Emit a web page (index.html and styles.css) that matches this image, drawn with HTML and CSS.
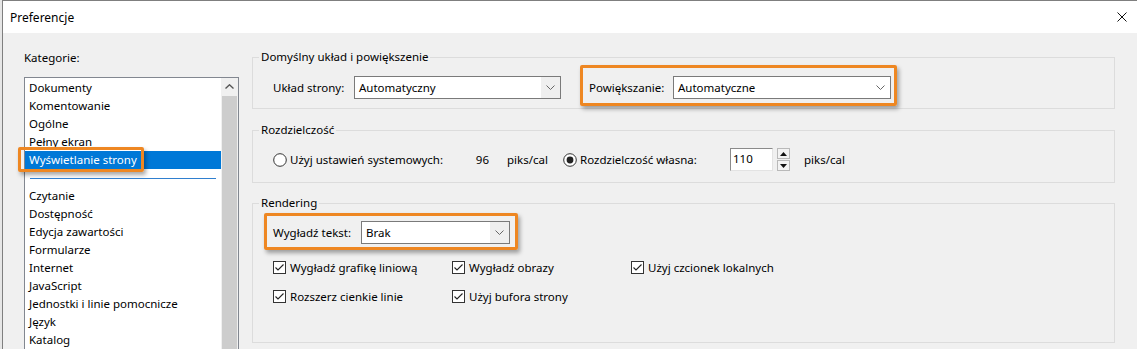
FILE: index.html
```html
<!DOCTYPE html>
<html lang="pl">
<head>
  <meta charset="UTF-8">
  <title>Preferencje</title>
  <link rel="stylesheet" href="styles.css">
</head>
<body>
  <div class="window">
    <header class="titlebar">
      <span>Preferencje</span>
      <svg class="close" viewBox="0 0 10 10"><path d="M0.5 0.5L9.5 9.5M9.5 0.5L0.5 9.5" stroke="#111" stroke-width="1"/></svg>
    </header>
    <div class="content">
      <!-- Categories -->
      <aside class="cats">
        <div class="cats-label">Kategorie:</div>
        <div class="listbox">
          <ul class="list">
            <li>Dokumenty</li>
            <li>Komentowanie</li>
            <li>Ogólne</li>
            <li>Pełny ekran</li>
            <li class="sel mark mark-cat">Wyświetlanie strony</li>
            <li class="sep"></li>
            <li>Czytanie</li>
            <li>Dostępność</li>
            <li>Edycja zawartości</li>
            <li>Formularze</li>
            <li>Internet</li>
            <li>JavaScript</li>
            <li>Jednostki i linie pomocnicze</li>
            <li>Język</li>
            <li>Katalog</li>
          </ul>
          <div class="scrollbar">
            <div class="sb-up"><svg width="9" height="5" viewBox="0 0 9 5"><path d="M0.5 4.5L4.5 0.8L8.5 4.5" fill="none" stroke="#555" stroke-width="1.4"/></svg></div>
            <div class="sb-thumb"></div>
          </div>
        </div>
      </aside>

      <!-- Settings -->
      <main class="panel">
        <fieldset class="group g-layout">
          <legend>Domyślny układ i powiększenie</legend>
          <div class="row">
            <span class="lbl lbl-page">Układ strony:</span>
            <div class="select sel-page shaded">
              <span>Automatyczny</span>
              <span class="arrow"><svg width="9" height="5" viewBox="0 0 9 5"><path d="M0.5 0.5L4.5 4.5L8.5 0.5" fill="none" stroke="#666"/></svg></span>
            </div>
            <div class="row zoom-field mark mark-zoom">
              <span class="lbl lbl-zoom">Powiększanie:</span>
              <div class="select sel-zoom">
                <span>Automatyczne</span>
                <span class="arrow"><svg width="9" height="5" viewBox="0 0 9 5"><path d="M0.5 0.5L4.5 4.5L8.5 0.5" fill="none" stroke="#666"/></svg></span>
              </div>
            </div>
          </div>
        </fieldset>

        <fieldset class="group g-res">
          <legend>Rozdzielczość</legend>
          <div class="row">
            <label class="opt opt-sys">
              <svg class="radio" viewBox="0 0 14 14"><circle cx="7" cy="7" r="6.3" fill="#fff" stroke="#333"/></svg>
              Użyj ustawień systemowych:
            </label>
            <span class="dpi">96</span>
            <span class="unit">piks/cal</span>
            <label class="opt opt-own">
              <svg class="radio" viewBox="0 0 14 14"><circle cx="7" cy="7" r="6.3" fill="#fff" stroke="#333"/><circle cx="7" cy="7" r="3.4" fill="#222"/></svg>
              Rozdzielczość własna:
            </label>
            <div class="spin-input">110</div>
            <div class="spin-btns">
              <span><svg width="7" height="4" viewBox="0 0 7 4"><path d="M0 4L3.5 0L7 4Z" fill="#111"/></svg></span>
              <span><svg width="7" height="4" viewBox="0 0 7 4"><path d="M0 0L3.5 4L7 0Z" fill="#111"/></svg></span>
            </div>
            <span class="unit unit-own">piks/cal</span>
          </div>
        </fieldset>

        <fieldset class="group g-render">
          <legend>Rendering</legend>
          <div class="row smooth-field mark mark-smooth">
            <span class="lbl lbl-smooth">Wygładź tekst:</span>
            <div class="select sel-smooth shaded">
              <span>Brak</span>
              <span class="arrow"><svg width="9" height="5" viewBox="0 0 9 5"><path d="M0.5 0.5L4.5 4.5L8.5 0.5" fill="none" stroke="#666"/></svg></span>
            </div>
          </div>
          <div class="checks">
            <label class="check"><svg class="box" viewBox="0 0 13 13"><rect x="0.5" y="0.5" width="12" height="12" fill="#fff" stroke="#333"/><path d="M2.5 6.5L5 9L10.5 3.5" fill="none" stroke="#222" stroke-width="1.1"/></svg>Wygładź grafikę liniową</label>
            <label class="check"><svg class="box" viewBox="0 0 13 13"><rect x="0.5" y="0.5" width="12" height="12" fill="#fff" stroke="#333"/><path d="M2.5 6.5L5 9L10.5 3.5" fill="none" stroke="#222" stroke-width="1.1"/></svg>Wygładź obrazy</label>
            <label class="check"><svg class="box" viewBox="0 0 13 13"><rect x="0.5" y="0.5" width="12" height="12" fill="#fff" stroke="#333"/><path d="M2.5 6.5L5 9L10.5 3.5" fill="none" stroke="#222" stroke-width="1.1"/></svg>Użyj czcionek lokalnych</label>
            <label class="check"><svg class="box" viewBox="0 0 13 13"><rect x="0.5" y="0.5" width="12" height="12" fill="#fff" stroke="#333"/><path d="M2.5 6.5L5 9L10.5 3.5" fill="none" stroke="#222" stroke-width="1.1"/></svg>Rozszerz cienkie linie</label>
            <label class="check"><svg class="box" viewBox="0 0 13 13"><rect x="0.5" y="0.5" width="12" height="12" fill="#fff" stroke="#333"/><path d="M2.5 6.5L5 9L10.5 3.5" fill="none" stroke="#222" stroke-width="1.1"/></svg>Użyj bufora strony</label>
          </div>
        </fieldset>
      </main>
    </div>
  </div>
</body>
</html>
```

FILE: styles.css
```css
*, *::before, *::after {
  box-sizing: border-box;
}
body {
  margin: 0;
  height: 349px;
  overflow: hidden;
  background-color: #e6e6e6;
  font-family: "Noto Sans", sans-serif;
  font-size: 11.5px;
  color: #000000;
}
.window {
  margin-left: 2px;
  height: 349px;
  border-left: 1px solid #7f7f7f;
  border-top: 1px solid #7f7f7f;
  background-color: #f0f0f0;
}
.titlebar {
  height: 32px;
  display: flex;
  align-items: center;
  justify-content: space-between;
  padding: 0 10px 0 7px;
  background-color: #ffffff;
  font-size: 12px;
}
.close {
  width: 10px;
  height: 10px;
}
.content {
  display: flex;
  height: 316px;
}

/* categories list */
.cats {
  width: 236px;
  flex-shrink: 0;
  padding: 17px 0 0 21px;
}
.cats-label {
  line-height: 16px;
  margin-bottom: 11px;
}
.listbox {
  display: flex;
  width: 215px;
  height: 272px;
  border: 1px solid #828790;
  border-bottom: none;
  background-color: #ffffff;
}
.list {
  flex: 1;
  list-style: none;
  margin: 0;
  padding: 1px 0 0;
}
.list li {
  height: 18px;
  line-height: 18px;
  padding-left: 4px;
  white-space: nowrap;
}
.list li.sel {
  background-color: #0078d7;
  color: #ffffff;
}
.list li.sep {
  position: relative;
}
.list li.sep::before {
  content: "";
  position: absolute;
  left: 5px;
  right: 5px;
  top: 9px;
  height: 1px;
  background-color: #2f7fcf;
}
.scrollbar {
  width: 17px;
  display: flex;
  flex-direction: column;
  background-color: #f0f0f0;
}
.sb-up {
  height: 17px;
  display: flex;
  align-items: center;
  justify-content: center;
}
.sb-thumb {
  flex: 1;
  margin: 1px 1px 0;
  background-color: #cdcdcd;
}

/* settings panel */
.panel {
  width: 863px;
  margin-left: 13px;
  padding-top: 16px;
  display: flex;
  flex-direction: column;
}
.group {
  margin: 0;
  min-width: 0;
  border: 1px solid #dcdcdc;
  padding: 10px 8px 9px 20px;
}
.group legend {
  padding: 0 2px;
  margin-left: -14px;
  line-height: 16px;
}
.g-res {
  margin-top: 13px;
  padding: 10px 8px 11px 20px;
}
.g-render {
  margin-top: 12px;
  padding: 10px 8px 37px 20px;
}
.row {
  display: flex;
  align-items: center;
}
.lbl {
  white-space: nowrap;
}
.lbl-page {
  width: 81px;
}
.lbl-zoom {
  width: 84px;
}
.lbl-smooth {
  width: 88px;
}
.select {
  height: 23px;
  display: flex;
  align-items: center;
  justify-content: space-between;
  padding-left: 4px;
  border: 1px solid #7a7a7a;
  background-color: #ffffff;
}
.select .arrow {
  width: 19px;
  height: 100%;
  display: flex;
  align-items: center;
  justify-content: center;
}
.select.shaded .arrow {
  background-color: #efefef;
}
.sel-page {
  width: 207px;
}
.zoom-field {
  margin-left: 28px;
  margin-top: 1px;
}
.sel-zoom {
  width: 218px;
}
.sel-smooth {
  width: 149px;
}

/* radio options */
.opt {
  display: flex;
  align-items: center;
  gap: 3px;
  white-space: nowrap;
}
.radio {
  width: 14px;
  height: 14px;
}
.opt-sys {
  width: 190px;
}
.dpi {
  width: 26px;
  text-align: right;
}
.unit {
  width: 56px;
  margin-left: 18px;
}
.opt-own {
  width: 167px;
}
.spin-input {
  width: 43px;
  height: 23px;
  padding: 2px 0 0 2px;
  border: 1px solid #e3e3e3;
  border-top-color: #8a8a8a;
  border-left-color: #8a8a8a;
  background-color: #ffffff;
}
.spin-btns {
  display: flex;
  flex-direction: column;
  gap: 1px;
  margin-left: 4px;
}
.spin-btns span {
  width: 13px;
  height: 11px;
  display: flex;
  align-items: center;
  justify-content: center;
  border: 1px solid #b9b9b9;
  background-color: #f3f3f3;
}
.unit-own {
  margin-left: 14px;
}

/* checkboxes */
.checks {
  display: grid;
  grid-template-columns: 179px 179px 179px;
  row-gap: 11px;
  margin-top: 14px;
}
.check {
  display: flex;
  align-items: center;
  height: 18px;
  white-space: nowrap;
}
.box {
  width: 13px;
  height: 13px;
  margin-right: 4px;
}

/* orange highlight frames */
.mark {
  position: relative;
}
.mark::after {
  content: "";
  position: absolute;
  border: 3px solid #ee8722;
  border-radius: 2px;
  box-shadow: 2px 3px 4px rgba(0, 0, 0, 0.35);
  pointer-events: none;
}
.mark-cat::after {
  left: -7px;
  top: -4px;
  width: 126px;
  height: 25px;
}
.mark-zoom::after {
  left: -9px;
  top: -11px;
  width: 317px;
  height: 41px;
}
.mark-smooth::after {
  left: -9px;
  top: -8px;
  width: 254px;
  height: 37px;
}
```
